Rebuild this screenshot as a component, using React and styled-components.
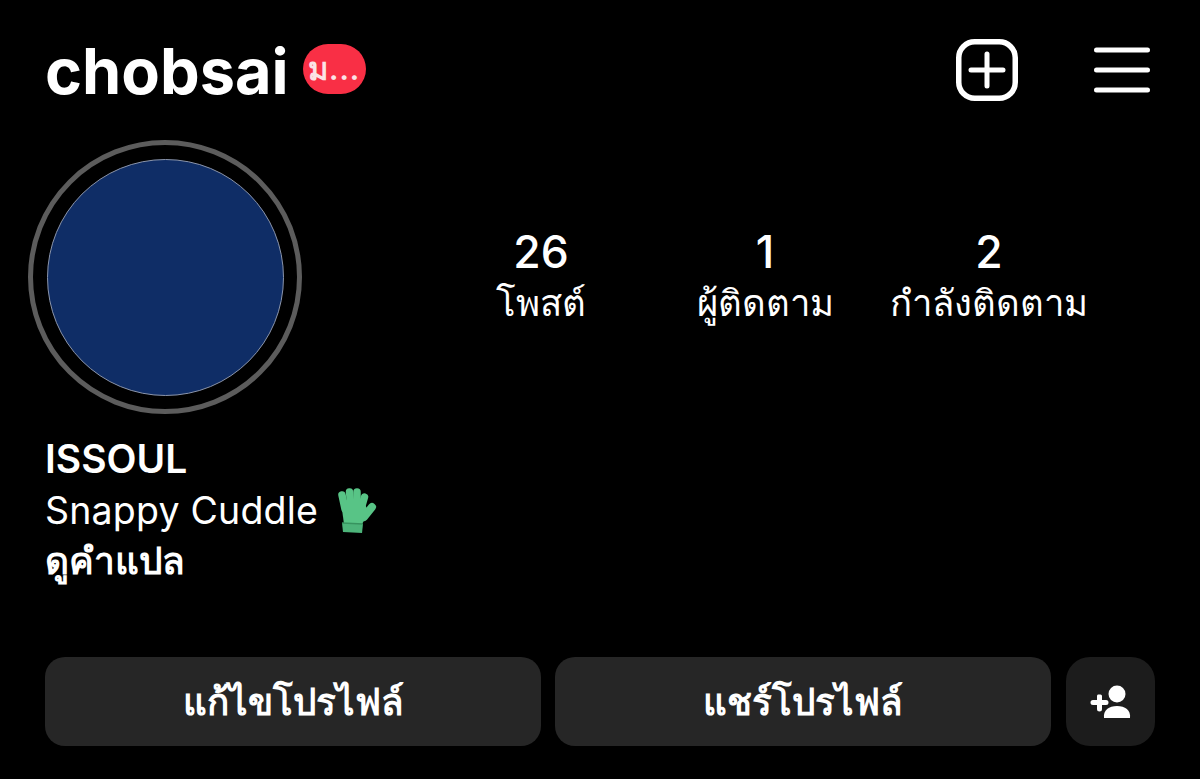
import React from "react";
import styled, { createGlobalStyle } from "styled-components";

const GlobalStyle = createGlobalStyle`
  html, body {
    margin: 0;
    background: #000;
  }
  body {
    font-family: Inter, "Liberation Sans", "Noto Sans", sans-serif;
    color: #fff;
  }
`;

const Page = styled.div`
  width: 1200px;
  height: 779px;
  background: #000;
  overflow: hidden;
  display: flex;
  flex-direction: column;
`;

const Header = styled.header`
  height: 140px;
  padding: 0 50px 0 45px;
  box-sizing: border-box;
  display: flex;
  align-items: flex-start;
  justify-content: space-between;
`;

const TitleGroup = styled.div`
  display: flex;
  align-items: center;
  gap: 14px;
  padding-top: 37px;
`;

const Username = styled.h1`
  margin: 0;
  font-size: 63px;
  line-height: 68px;
  font-weight: 700;
`;

const NoteBadge = styled.span`
  width: 63px;
  height: 50px;
  border-radius: 25px;
  background: #f92f45;
  color: #fbe3e6;
  font-size: 31px;
  font-weight: 600;
  letter-spacing: 0.5px;
  display: flex;
  align-items: center;
  justify-content: center;
  margin-top: -4px;
`;

const HeaderIcons = styled.div`
  display: flex;
  align-items: center;
  gap: 76px;
  padding-top: 39px;
`;

const ProfileRow = styled.section`
  display: flex;
  align-items: center;
  padding-left: 28px;
`;

const AvatarRing = styled.div`
  width: 274px;
  height: 274px;
  box-sizing: border-box;
  border: 5px solid #5c5c5c;
  border-radius: 50%;
  display: flex;
  align-items: center;
  justify-content: center;
`;

const Avatar = styled.div`
  width: 237px;
  height: 237px;
  box-sizing: border-box;
  border-radius: 50%;
  background: #0f2d66;
  border: 1px solid #8b95ab;
`;

const Stats = styled.div`
  display: flex;
  margin-left: 127px;
  margin-top: 3px;
`;

const Stat = styled.div`
  width: 224px;
  display: flex;
  flex-direction: column;
  align-items: center;
`;

const StatValue = styled.strong`
  font-size: 44.500px;
  line-height: 48px;
  font-weight: 550;
`;

const StatLabel = styled.span`
  font-size: 36.500px;
  line-height: 54px;
  white-space: nowrap;
`;

const Bio = styled.div`
  padding: 19px 0 0 45px;
  display: flex;
  flex-direction: column;
`;

const DisplayName = styled.div`
  font-size: 39px;
  line-height: 51px;
  font-weight: 600;
`;

const BioLine = styled.div`
  font-size: 37.500px;
  line-height: 53px;
  letter-spacing: 0.2px;
  display: flex;
  align-items: center;
  gap: 19px;
`;

const Translate = styled.div`
  font-size: 37px;
  line-height: 47px;
  font-weight: 600;
`;

const Actions = styled.div`
  display: flex;
  gap: 14px;
  padding: 0 45px;
  margin-top: 73px;
`;

const ActionButton = styled.button`
  width: 496px;
  height: 89px;
  border: 0;
  border-radius: 20px;
  background: #262626;
  color: #fff;
  font: 600 36.800px Inter, "Liberation Sans", sans-serif;
  padding: 0;
`;

const AddButton = styled(ActionButton)`
  width: 89px;
  margin-left: 1px;
  border-radius: 24px;
  background: #1c1c1c;
  display: flex;
  align-items: center;
  justify-content: center;
`;

const PlusIcon = () => (
  <svg width="62" height="62" viewBox="0 0 62 62" fill="none" stroke="#fff" strokeLinecap="round">
    <rect x="2.75" y="2.75" width="56.5" height="56.5" rx="16" strokeWidth="5.5" />
    <path d="M31 15v32M15 31h32" strokeWidth="5" />
  </svg>
);

const MenuIcon = () => (
  <svg width="56" height="46" viewBox="0 0 56 46" fill="none" stroke="#fff" strokeWidth="5" strokeLinecap="round">
    <path d="M2.5 3h51M2.5 23h51M2.5 43h51" />
  </svg>
);

const GloveIcon = () => (
  <svg width="40" height="47" viewBox="0 0 40 47">
    <g fill="none" stroke="#58c486" strokeLinecap="round">
      <path d="M5 8 L8 22" strokeWidth="7.500" />
      <path d="M12.500 5 L14 20" strokeWidth="7.500" />
      <path d="M20 5 L20 20" strokeWidth="7.500" />
      <path d="M27.500 10 L24 22" strokeWidth="7.500" />
      <path d="M35 20 L27 30" strokeWidth="8" />
    </g>
    <path d="M4 15 L27 15 L32 26 L25 37 L7 37 Z" fill="#58c486" />
    <path d="M5 36 L26 37 L25 46 L6 45 Z" fill="#4db47a" />
    <path d="M5 36 L26 37" stroke="#37935f" strokeWidth="1.500" fill="none" />
  </svg>
);

const AddPersonIcon = () => (
  <svg width="42" height="34" viewBox="0 0 42 34" fill="#fff">
    <circle cx="27" cy="9" r="8.500" />
    <path d="M14 33 c-1 -8 5 -12 13 -12 s14 4 13 12 Z" />
    <path d="M8 9.500 h2.500 a1.500 1.500 0 0 1 1.500 1.500 v4 h4 a2 2 0 0 1 0 5 h-4 v4 a2.500 2.500 0 0 1 -5 0 v-4 h-4 a2.500 2.500 0 0 1 0 -5 h4 v-4 a2 2 0 0 1 1 -1.500 Z" />
  </svg>
);

const stats = [
  { value: "26", label: "โพสต์" },
  { value: "1", label: "ผู้ติดตาม" },
  { value: "2", label: "กำลังติดตาม" },
];

export default function App() {
  return (
    <Page>
      <GlobalStyle />
      <Header>
        <TitleGroup>
          <Username>chobsai</Username>
          <NoteBadge>ม...</NoteBadge>
        </TitleGroup>
        <HeaderIcons>
          <PlusIcon />
          <MenuIcon />
        </HeaderIcons>
      </Header>
      <ProfileRow>
        <AvatarRing>
          <Avatar />
        </AvatarRing>
        <Stats>
          {stats.map((stat) => (
            <Stat key={stat.label}>
              <StatValue>{stat.value}</StatValue>
              <StatLabel>{stat.label}</StatLabel>
            </Stat>
          ))}
        </Stats>
      </ProfileRow>
      <Bio>
        <DisplayName>ISSOUL</DisplayName>
        <BioLine>
          Snappy Cuddle
          <GloveIcon />
        </BioLine>
        <Translate>ดูคำแปล</Translate>
      </Bio>
      <Actions>
        <ActionButton>แก้ไขโปรไฟล์</ActionButton>
        <ActionButton>แชร์โปรไฟล์</ActionButton>
        <AddButton aria-label="เพิ่มผู้ติดตาม">
          <AddPersonIcon />
        </AddButton>
      </Actions>
    </Page>
  );
}
